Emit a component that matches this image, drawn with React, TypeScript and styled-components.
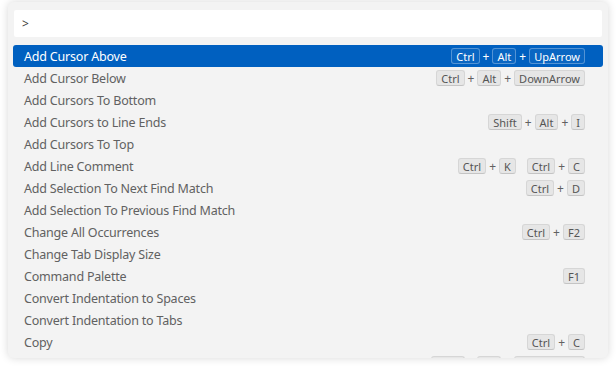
import React from "react";
import styled, { createGlobalStyle } from "styled-components";

const Global = createGlobalStyle`
  html, body { margin: 0; padding: 0; background: #ffffff; }
  body { font-family: "Noto Sans", "Open Sans", sans-serif; }
`;

const Page = styled.div`
  width: 616px;
  height: 368px;
  padding: 2px 8px 0 8px;
  box-sizing: border-box;
`;

const Panel = styled.div`
  width: 600px;
  height: 356px;
  background: #f3f3f3;
  border-radius: 6px;
  box-shadow: 0 0 8px rgba(0, 0, 0, 0.16);
  padding: 8px 5px 0 5px;
  box-sizing: border-box;
  overflow: hidden;
  display: flex;
  flex-direction: column;
  gap: 8px;
`;

const InputBox = styled.div`
  flex-shrink: 0;
  height: 27px;
  margin: 0 1px;
  background: #ffffff;
  border-radius: 2px;
  display: flex;
  align-items: center;
  padding-left: 8px;
  font-size: 12px;
  color: #3b3b3b;
`;

const List = styled.div`
  display: flex;
  flex-direction: column;
`;

const Row = styled.div<{ $active?: boolean }>`
  height: 22px;
  display: flex;
  align-items: center;
  justify-content: space-between;
  padding: 0 18px 0 11px;
  border-radius: 3px;
  font-size: 12.5px;
  letter-spacing: -0.2px;
  color: ${(p) => (p.$active ? "#ffffff" : "#616161")};
  background: ${(p) => (p.$active ? "#0060c0" : "transparent")};
  flex-shrink: 0;
`;

const Label = styled.span`
  white-space: nowrap;
`;

const Keys = styled.div`
  display: flex;
  align-items: center;
  gap: 11px;
  letter-spacing: 0;
`;

const Chord = styled.div`
  display: flex;
  align-items: center;
  gap: 3px;
`;

const Key = styled.span<{ $active?: boolean }>`
  display: inline-flex;
  align-items: center;
  height: 16px;
  padding: 0 4px;
  box-sizing: border-box;
  border-radius: 3px;
  font-size: 11px;
  line-height: 1;
  color: ${(p) => (p.$active ? "#ffffff" : "#555555")};
  background: ${(p) => (p.$active ? "rgba(255,255,255,0.04)" : "#e6e6e6")};
  border: 1px solid ${(p) => (p.$active ? "rgba(255,255,255,0.3)" : "#d6d6d6")};
  border-bottom-color: ${(p) => (p.$active ? "rgba(255,255,255,0.3)" : "#c4c4c4")};
`;

const Plus = styled.span`
  font-size: 12px;
`;

type Item = { label: string; keys?: string[][] };

const items: Item[] = [
  { label: "Add Cursor Above", keys: [["Ctrl", "Alt", "UpArrow"]] },
  { label: "Add Cursor Below", keys: [["Ctrl", "Alt", "DownArrow"]] },
  { label: "Add Cursors To Bottom" },
  { label: "Add Cursors to Line Ends", keys: [["Shift", "Alt", "I"]] },
  { label: "Add Cursors To Top" },
  { label: "Add Line Comment", keys: [["Ctrl", "K"], ["Ctrl", "C"]] },
  { label: "Add Selection To Next Find Match", keys: [["Ctrl", "D"]] },
  { label: "Add Selection To Previous Find Match" },
  { label: "Change All Occurrences", keys: [["Ctrl", "F2"]] },
  { label: "Change Tab Display Size" },
  { label: "Command Palette", keys: [["F1"]] },
  { label: "Convert Indentation to Spaces" },
  { label: "Convert Indentation to Tabs" },
  { label: "Copy", keys: [["Ctrl", "C"]] },
  { label: "Copy Line Down", keys: [["Shift", "Alt", "DownArrow"]] },
];

export default function App() {
  return (
    <>
      <Global />
      <Page>
        <Panel>
          <InputBox>&gt;</InputBox>
          <List>
            {items.map((it, i) => {
              const active = i === 0;
              return (
                <Row key={it.label} $active={active}>
                  <Label>{it.label}</Label>
                  {it.keys && (
                    <Keys>
                      {it.keys.map((chord, ci) => (
                        <Chord key={ci}>
                          {chord.map((k, ki) => (
                            <React.Fragment key={ki}>
                              {ki > 0 && <Plus>+</Plus>}
                              <Key $active={active}>{k}</Key>
                            </React.Fragment>
                          ))}
                        </Chord>
                      ))}
                    </Keys>
                  )}
                </Row>
              );
            })}
          </List>
        </Panel>
      </Page>
    </>
  );
}
